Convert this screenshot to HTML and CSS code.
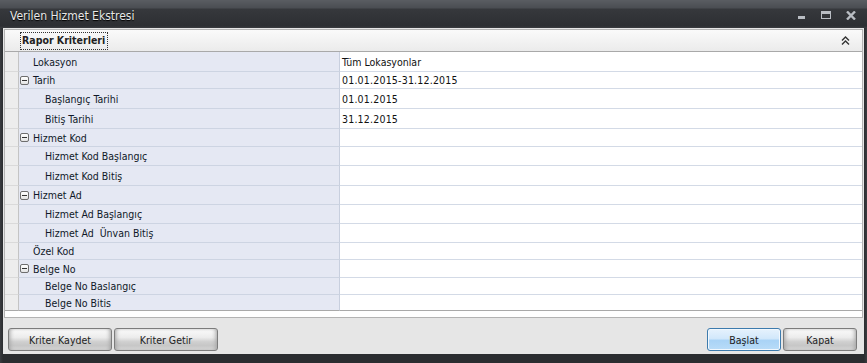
FILE: index.html
```html
<!DOCTYPE html>
<html lang="tr">
<head>
    <meta charset="UTF-8">
    <title>Verilen Hizmet Ekstresi</title>
    <link rel="stylesheet" href="styles.css">
</head>
<body>
    <div class="window">
        <div class="titlebar">
            <span class="title">Verilen Hizmet Ekstresi</span>
            <div class="win-buttons">
                <svg class="win-btn" width="9" height="9" viewBox="0 0 9 9"><rect x="1" y="5" width="7" height="3" fill="#b9bdc3"/></svg>
                <svg class="win-btn" width="10" height="9" viewBox="0 0 10 9"><rect x="0.5" y="0.5" width="9" height="7" fill="none" stroke="#b9bdc3"/><rect x="0" y="0" width="10" height="3" fill="#b9bdc3"/></svg>
                <svg class="win-btn" width="10" height="9" viewBox="0 0 10 9"><path d="M1 0.5 L9 8.5 M9 0.5 L1 8.5" stroke="#b9bdc3" stroke-width="2.4"/></svg>
            </div>
        </div>

        <div class="client">
            <div class="panel">
                <div class="group-header">
                    <span class="group-title">Rapor Kriterleri</span>
                    <svg class="collapse" width="9" height="9" viewBox="0 0 9 9">
                        <path d="M1 4.5 L4.5 1 L8 4.5 M1 8.5 L4.5 5 L8 8.5" fill="none" stroke="#333" stroke-width="1.4"/>
                    </svg>
                </div>

                <div class="grid">
                    <div class="row"><div class="strip"></div><div class="label lvl0">Lokasyon</div><div class="value">Tüm Lokasyonlar</div></div>
                    <div class="row"><div class="strip"></div><div class="label"><span class="toggle"></span>Tarih</div><div class="value date">01.01.2015-31.12.2015</div></div>
                    <div class="row"><div class="strip"></div><div class="label lvl1">Başlangıç Tarihi</div><div class="value date">01.01.2015</div></div>
                    <div class="row"><div class="strip"></div><div class="label lvl1">Bitiş Tarihi</div><div class="value date">31.12.2015</div></div>
                    <div class="row"><div class="strip"></div><div class="label"><span class="toggle"></span>Hizmet Kod</div><div class="value"></div></div>
                    <div class="row"><div class="strip"></div><div class="label lvl1">Hizmet Kod Başlangıç</div><div class="value"></div></div>
                    <div class="row"><div class="strip"></div><div class="label lvl1">Hizmet Kod Bitiş</div><div class="value"></div></div>
                    <div class="row"><div class="strip"></div><div class="label"><span class="toggle"></span>Hizmet Ad</div><div class="value"></div></div>
                    <div class="row"><div class="strip"></div><div class="label lvl1">Hizmet Ad Başlangıç</div><div class="value"></div></div>
                    <div class="row"><div class="strip"></div><div class="label lvl1">Hizmet Ad&nbsp; Ünvan Bitiş</div><div class="value"></div></div>
                    <div class="row"><div class="strip"></div><div class="label lvl0">Özel Kod</div><div class="value"></div></div>
                    <div class="row"><div class="strip"></div><div class="label"><span class="toggle"></span>Belge No</div><div class="value"></div></div>
                    <div class="row"><div class="strip"></div><div class="label lvl1">Belge No Baslangıç</div><div class="value"></div></div>
                    <div class="row last"><div class="strip"></div><div class="label lvl1">Belge No Bitis</div><div class="value"></div></div>
                </div>
            </div>

            <div class="actions">
                <div class="action-group">
                    <button class="btn wide">Kriter Kaydet</button>
                    <button class="btn wide">Kriter Getir</button>
                </div>
                <div class="action-group">
                    <button class="btn narrow primary">Başlat</button>
                    <button class="btn narrow">Kapat</button>
                </div>
            </div>
        </div>
    </div>
</body>
</html>
```

FILE: styles.css
```css
/* Window frame */
html, body {
    margin: 0;
    padding: 0;
    width: 867px;
    height: 363px;
    overflow: hidden;
    background-color: #2a2c2f;
    font-family: "DejaVu Sans Condensed", "DejaVu Sans", "Liberation Sans", sans-serif;
    font-size: 10.5px;
    color: #1b1b1b;
}

.window {
    width: 867px;
    height: 363px;
    display: flex;
    flex-direction: column;
    background: linear-gradient(to right, #3a3c40 0, #2b2d30 3px, #2b2d30 864px, #3a3c40 867px);
}

.titlebar {
    height: 28px;
    flex: none;
    display: flex;
    align-items: center;
    justify-content: space-between;
    padding: 0 10px;
    background: linear-gradient(#5a5d62 0, #4a4d52 8px, #36383c 9px, #2d2f33 26px, #3b3d41 28px);
}

.title {
    color: #e8e8e8;
    font-size: 12px;
    text-shadow: 0 1px 1px #000;
    margin-top: 3px;
}

.win-buttons {
    display: flex;
    align-items: center;
    gap: 15px;
    margin-top: 3px;
    margin-right: 1px;
}

/* Main area */
.client {
    flex: 1;
    margin: 0 3px 9px;
    padding-top: 1px;
    background-color: #e6e6e6;
    display: flex;
    flex-direction: column;
}

.panel {
    height: 289px;
    margin: 0 1px;
    box-sizing: border-box;
    border: 1px solid #b3b3b3;
    background-color: #fff;
}

.group-header {
    height: 22px;
    box-sizing: border-box;
    border-bottom: 1px solid #a9a9a9;
    background: linear-gradient(#fafafa, #ebebeb);
    display: flex;
    align-items: center;
    justify-content: space-between;
    padding: 0 12px 0 16px;
}

.group-title {
    font-weight: bold;
    color: #222;
    outline: 1px dotted #333;
    padding: 1px 2px 2px 1px;
    line-height: 13px;
}

/* Property grid */
.grid {
    display: grid;
    grid-template-rows: 20px 17px 20px 20px 18px 19px 20px 19px 19px 19px 17px 18px 17px 16px;
}

.row {
    display: grid;
    grid-template-columns: 14px 321px 1fr;
}

.row > div {
    box-sizing: border-box;
    display: flex;
    align-items: center;
}

.strip {
    background-color: #ededed;
    border-right: 1px solid #c4c4c4;
    border-bottom: 1px solid #dadada;
}

.label {
    background-color: #e5e8f3;
    border-right: 1px solid #c8cfde;
    border-bottom: 1px solid #cdd4e2;
    padding-left: 1px;
    color: #101828;
}

.label.lvl0 {
    padding-left: 14px;
}

.label.lvl1 {
    padding-left: 26px;
}

.value {
    border-bottom: 1px solid #d3dae6;
    padding-left: 2px;
    color: #111;
}

.value.date {
    letter-spacing: 0.2px;
}

.row.last > div {
    border-bottom-color: #a9a9a9;
}

.toggle {
    width: 9px;
    height: 9px;
    box-sizing: border-box;
    border: 1px solid #6e6e6e;
    border-radius: 2px;
    background: linear-gradient(#fff, #e4e4e4);
    margin-right: 4px;
    position: relative;
}

.toggle::after {
    content: "";
    position: absolute;
    left: 1px;
    top: 3px;
    width: 5px;
    height: 1px;
    background-color: #333;
}

/* Bottom buttons */
.actions {
    flex: 1;
    display: flex;
    justify-content: space-between;
    align-items: flex-start;
    padding: 10px 7px 0 5px;
}

.action-group {
    display: flex;
    gap: 2px;
}

.btn {
    height: 23px;
    font-family: inherit;
    font-size: 10.5px;
    color: #222;
    border: 1px solid #7c7c7c;
    border-radius: 3px;
    padding: 0;
    background: linear-gradient(#fbfbfb 0, #ececec 40%, #d0d0d0 60%, #c6c6c6 80%, #dcdcdc 100%);
    box-shadow: inset 3px 0 4px -2px #a0a0a0, inset -3px 0 4px -2px #a0a0a0;
}

.btn.wide {
    width: 104px;
}

.btn.narrow {
    width: 74px;
}

.btn.primary {
    border-color: #3d7bad;
    background: linear-gradient(#e6f2fd 0, #d2e8fb 45%, #a9d3f6 55%, #b9dcf8 100%);
    box-shadow: inset 0 0 0 1px #f2f8fe;
}
```
